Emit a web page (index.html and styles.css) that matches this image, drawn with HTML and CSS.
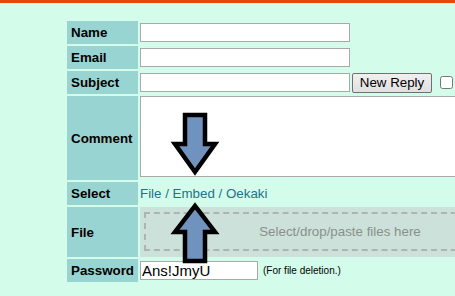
FILE: index.html
```html
<!DOCTYPE html>
<html lang="en">
<head>
    <meta charset="UTF-8">
    <meta name="viewport" content="width=device-width, initial-scale=1.0">
    <title>New Reply</title>
    <link rel="stylesheet" href="styles.css">
</head>
<body>
    <div class="topbar"></div>

    <form class="post-form">
        <div class="label">Name</div>
        <div class="field"><input type="text" class="text-input"></div>

        <div class="label">Email</div>
        <div class="field"><input type="text" class="text-input"></div>

        <div class="label">Subject</div>
        <div class="field">
            <input type="text" class="text-input">
            <button type="button" class="submit-btn">New Reply</button>
            <input type="checkbox" class="spoiler">
        </div>

        <div class="label">Comment</div>
        <div class="field field-top"><textarea class="comment"></textarea></div>

        <div class="label">Select</div>
        <div class="field select-links">
            <span><a href="#">File</a> / <a href="#">Embed</a> / <a href="#">Oekaki</a></span>
        </div>

        <div class="label">File</div>
        <div class="field field-top">
            <div class="dropzone"><span>Select/drop/paste files here</span></div>
        </div>

        <div class="label">Password</div>
        <div class="field">
            <input type="text" class="password" value="Ans!JmyU">
            <span class="hint">(For file deletion.)</span>
        </div>
    </form>

    <!-- arrows drawn over the form -->
    <svg class="arrows" width="455" height="296" viewBox="0 0 455 296">
        <polygon points="185,115 205,115 205,144 215,144 195,172 175,144 185,144" />
        <polygon points="185,261 205,261 205,232 215,232 195,206 175,232 185,232" />
    </svg>
</body>
</html>
```

FILE: styles.css
```css
body {
    font-family: 'Liberation Sans', Arial, sans-serif;
    font-size: 13.33px;
    margin: 0;
    background-color: #d3fdea;
    overflow: hidden;
    position: relative;
    height: 296px;
}
.topbar {
    height: 3px;
    background-color: #e4480a;
}
.post-form {
    display: grid;
    grid-template-columns: 71px 400px;
    grid-template-rows: 23px 23px 23px 84px 23px 50px 23px;
    gap: 2px;
    margin: 18px 0 0 67px;
}
.label {
    background-color: #98d4d2;
    font-weight: bold;
    padding-left: 4px;
    display: flex;
    align-items: center;
    color: #000;
}
.field {
    display: flex;
    align-items: center;
}
.field-top {
    align-items: flex-start;
}
.text-input {
    width: 210px;
    height: 19px;
    box-sizing: border-box;
    border: 1px solid #a9a9a9;
    margin: 0;
    padding: 0 2px;
    background: white;
}
.submit-btn {
    width: 80px;
    height: 20px;
    margin: 0 0 0 2px;
    padding: 0;
    font-family: 'Liberation Sans', Arial, sans-serif;
    font-size: 13.33px;
    color: #000;
    background: linear-gradient(#f0f0f0, #e0e0e0);
    border: 1px solid #707070;
    border-radius: 2px;
}
.spoiler {
    width: 13px;
    height: 13px;
    margin: 0 0 0 8px;
}
.comment {
    width: 400px;
    height: 81px;
    box-sizing: border-box;
    border: 1px solid #a9a9a9;
    margin: 0;
    resize: none;
}
.select-links {
    color: #24708c;
}
.select-links a {
    color: #24708c;
    text-decoration: none;
}
.dropzone {
    width: 402px;
    height: 50px;
    background-color: #cce1d9;
    padding: 5px 4px 6px 4px;
    box-sizing: border-box;
}
.dropzone span {
    display: flex;
    align-items: center;
    justify-content: center;
    height: 100%;
    border: 2px dashed #adb5b1;
    box-sizing: border-box;
    color: #8a8f8c;
}
.password {
    width: 118px;
    height: 19px;
    box-sizing: border-box;
    border: 1px solid #a9a9a9;
    margin: 0;
    padding: 0 1px;
    font-family: 'Liberation Sans', Arial, sans-serif;
    font-size: 15px;
    color: #000;
}
.hint {
    font-size: 10px;
    margin-left: 5px;
    color: #000;
}
.arrows {
    position: absolute;
    left: 0;
    top: 0;
}
.arrows polygon {
    fill: #7092be;
    stroke: #000;
    stroke-width: 4.5;
    stroke-linejoin: miter;
}
```
